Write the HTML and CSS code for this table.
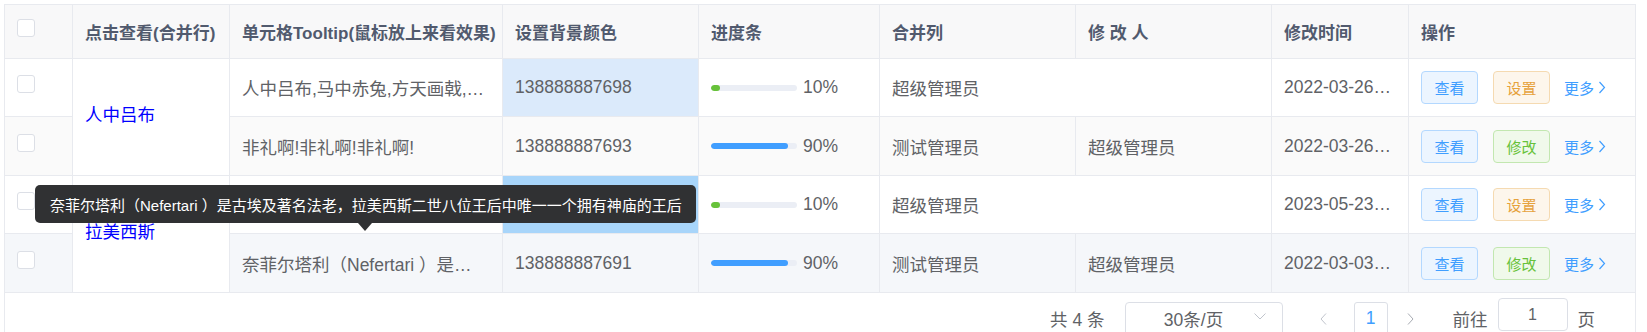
FILE: index.html
```html
<!DOCTYPE html>
<html lang="zh-CN">
<head>
<meta charset="utf-8">
<title>表格</title>
<link rel="stylesheet" href="styles.css">
</head>
<body>
<div class="panel">
  <div class="grid">
    <div class="row head">
      <div class="cell"><span class="checkbox"></span></div>
      <div class="cell">点击查看(合并行)</div>
      <div class="cell">单元格Tooltip(鼠标放上来看效果)</div>
      <div class="cell">设置背景颜色</div>
      <div class="cell">进度条</div>
      <div class="cell">合并列</div>
      <div class="cell">修 改 人</div>
      <div class="cell">修改时间</div>
      <div class="cell last">操作</div>
    </div>

    <div class="row">
      <div class="cell"><span class="checkbox"></span></div>
      <div class="cell merged-rows"><a class="name-link" href="#">人中吕布</a></div>
      <div class="cell tip"><span class="ellipsis">人中吕布,马中赤兔,方天画戟,威震天下</span></div>
      <div class="cell tint-light"><span class="ellipsis">138888887698</span></div>
      <div class="cell"><div class="progress"><div class="track"><div class="bar green" style="width:10%"></div></div><span>10%</span></div></div>
      <div class="cell merged-cols">超级管理员</div>
      <div class="cell time"><span class="ellipsis">2022-03-26 12:30:00</span></div>
      <div class="cell last actions">
        <span class="btn btn-primary">查看</span>
        <span class="btn btn-warning">设置</span>
        <a class="more" href="#">更多<svg width="8" height="13" viewBox="0 0 8 13"><polyline points="1.5,1 6.5,6.5 1.5,12" fill="none" stroke="currentColor" stroke-width="1.2"/></svg></a>
      </div>
    </div>

    <div class="row stripe">
      <div class="cell"><span class="checkbox"></span></div>
      <div class="cell tip"><span class="ellipsis">非礼啊!非礼啊!非礼啊!</span></div>
      <div class="cell"><span class="ellipsis">138888887693</span></div>
      <div class="cell"><div class="progress"><div class="track"><div class="bar blue" style="width:90%"></div></div><span>90%</span></div></div>
      <div class="cell">测试管理员</div>
      <div class="cell">超级管理员</div>
      <div class="cell time"><span class="ellipsis">2022-03-26 18:20:00</span></div>
      <div class="cell last actions">
        <span class="btn btn-primary">查看</span>
        <span class="btn btn-success">修改</span>
        <a class="more" href="#">更多<svg width="8" height="13" viewBox="0 0 8 13"><polyline points="1.5,1 6.5,6.5 1.5,12" fill="none" stroke="currentColor" stroke-width="1.2"/></svg></a>
      </div>
    </div>

    <div class="row">
      <div class="cell"><span class="checkbox"></span></div>
      <div class="cell merged-rows"><a class="name-link" href="#">拉美西斯</a></div>
      <div class="cell tip"><span class="ellipsis">奈菲尔塔利（Nefertari ）是古埃及著名法老，拉美西斯二世八位王后中唯一一个拥有神庙的王后</span></div>
      <div class="cell tint-strong"><span class="ellipsis">138888887692</span></div>
      <div class="cell"><div class="progress"><div class="track"><div class="bar green" style="width:10%"></div></div><span>10%</span></div></div>
      <div class="cell merged-cols">超级管理员</div>
      <div class="cell time"><span class="ellipsis">2023-05-23 09:15:00</span></div>
      <div class="cell last actions">
        <span class="btn btn-primary">查看</span>
        <span class="btn btn-warning">设置</span>
        <a class="more" href="#">更多<svg width="8" height="13" viewBox="0 0 8 13"><polyline points="1.5,1 6.5,6.5 1.5,12" fill="none" stroke="currentColor" stroke-width="1.2"/></svg></a>
      </div>
    </div>

    <div class="row hover">
      <div class="cell"><span class="checkbox"></span></div>
      <div class="cell tip"><span class="ellipsis">奈菲尔塔利（Nefertari ）是古埃及著名法老，拉美西斯二世八位王后中唯一一个拥有神庙的王后</span></div>
      <div class="cell"><span class="ellipsis">138888887691</span></div>
      <div class="cell"><div class="progress"><div class="track"><div class="bar blue" style="width:90%"></div></div><span>90%</span></div></div>
      <div class="cell">测试管理员</div>
      <div class="cell">超级管理员</div>
      <div class="cell time"><span class="ellipsis">2022-03-03 10:00:00</span></div>
      <div class="cell last actions">
        <span class="btn btn-primary">查看</span>
        <span class="btn btn-success">修改</span>
        <a class="more" href="#">更多<svg width="8" height="13" viewBox="0 0 8 13"><polyline points="1.5,1 6.5,6.5 1.5,12" fill="none" stroke="currentColor" stroke-width="1.2"/></svg></a>
      </div>
    </div>
  </div>

  <div class="pager">
    <span class="total">共 4 条</span>
    <div class="select">
      <span class="select-text">30条/页</span>
      <svg class="select-arrow" width="12" height="7" viewBox="0 0 12 7"><polyline points="0.5,0.5 6,6 11.5,0.5" fill="none" stroke="#c0c4cc" stroke-width="1"/></svg>
    </div>
    <span class="nav prev"><svg width="7" height="12" viewBox="0 0 7 12"><polyline points="6,0.5 1,6 6,11.5" fill="none" stroke="currentColor" stroke-width="1"/></svg></span>
    <span class="page active">1</span>
    <span class="nav next"><svg width="7" height="12" viewBox="0 0 7 12"><polyline points="1,0.5 6,6 1,11.5" fill="none" stroke="currentColor" stroke-width="1"/></svg></span>
    <span class="jump-label">前往</span>
    <span class="jump-input">1</span>
    <span class="jump-unit">页</span>
  </div>

  <div class="tooltip">奈菲尔塔利（Nefertari ）是古埃及著名法老，拉美西斯二世八位王后中唯一一个拥有神庙的王后</div>
</div>
</body>
</html>
```

FILE: styles.css
```css
* {
  box-sizing: border-box;
}

html,
body {
  margin: 0;
  overflow: hidden;
  background: #ffffff;
}

body {
  padding: 4px 11px 0 4px;
  font-family: "Liberation Sans", "Noto Sans CJK SC", sans-serif;
  font-size: 17.5px;
  color: #606266;
}

.panel {
  position: relative;
  width: 1632px;
  height: 360px;
  border: 1px solid #e8eaef;
}

.grid {
  display: grid;
  grid-template-columns: 68px 157px 273px 196px 181px 196px 196px 137px 226px;
  grid-template-rows: 54px 58px 59px 58px 59px;
}

.row {
  display: contents;
}

.cell {
  display: flex;
  align-items: center;
  min-width: 0;
  padding: 0 12px;
  overflow: hidden;
  white-space: nowrap;
  border-right: 1px solid #e8eaef;
  border-bottom: 1px solid #e8eaef;
  background: #ffffff;
}

.cell.last {
  border-right: none;
}

.cell.tip,
.cell.time {
  padding-right: 14px;
}

.head .cell {
  background: #f8f8f9;
  color: #515a6e;
  font-weight: bold;
  font-size: 17px;
}

.stripe .cell {
  background: #fafafa;
}

.hover .cell {
  background: #f5f7fa;
}

.cell.merged-rows {
  grid-row: span 2;
  background: #ffffff;
}

.cell.merged-cols {
  grid-column: span 2;
}

.cell.tint-light {
  background: #dbeafb;
}

.cell.tint-strong {
  background: #a8d5fa;
}

.ellipsis {
  display: block;
  min-width: 0;
  overflow: hidden;
  text-overflow: ellipsis;
  white-space: nowrap;
}

.checkbox {
  display: block;
  width: 18px;
  height: 18px;
  margin-bottom: 7px;
  border: 1px solid #dcdfe6;
  border-radius: 3px;
  background: #ffffff;
}

.name-link {
  color: #0000ff;
  text-decoration: none;
  margin-top: -8px;
}

.progress {
  display: flex;
  align-items: center;
  gap: 6px;
}

.track {
  width: 86px;
  height: 6px;
  border-radius: 3px;
  background: #ebeef5;
  overflow: hidden;
}

.bar {
  height: 100%;
  border-radius: 3px;
}

.bar.green {
  background: #67c23a;
}

.bar.blue {
  background: #409eff;
}

.actions {
  gap: 15px;
}

.btn {
  display: inline-flex;
  align-items: center;
  justify-content: center;
  width: 57px;
  height: 33px;
  border: 1px solid;
  border-radius: 4px;
  font-size: 15px;
}

.btn-primary {
  color: #409eff;
  background: #ecf5ff;
  border-color: #b3d8ff;
}

.btn-warning {
  color: #e6a23c;
  background: #fdf6ec;
  border-color: #f5dab1;
}

.btn-success {
  color: #67c23a;
  background: #f0f9eb;
  border-color: #c2e7b0;
}

.more {
  display: inline-flex;
  align-items: center;
  gap: 4px;
  margin-left: -1px;
  font-size: 15px;
  color: #409eff;
  text-decoration: none;
}

.pager {
  display: flex;
  align-items: center;
  justify-content: flex-end;
  height: 33px;
  margin-top: 9px;
  padding-right: 40px;
}

.total {
  margin-right: 20px;
}

.select {
  display: flex;
  align-items: center;
  width: 158px;
  height: 34px;
  padding: 0 16px 0 0;
  border: 1px solid #dcdfe6;
  border-radius: 4px;
}

.select-text {
  flex: 1;
  text-align: center;
  padding-left: 8px;
}

.select-arrow {
  margin-top: -5px;
}

.nav {
  display: flex;
  align-items: center;
  justify-content: center;
  width: 30px;
  height: 32px;
}

.prev {
  margin-left: 26px;
  color: #c0c4cc;
}

.next {
  margin-left: 8px;
  color: #a8abb2;
}

.page {
  display: flex;
  align-items: center;
  justify-content: center;
  width: 34px;
  height: 33px;
  margin-left: 15px;
  border: 1px solid #dcdfe6;
  border-radius: 3px;
}

.page.active {
  color: #409eff;
}

.jump-label {
  margin-left: 27px;
}

.jump-input {
  display: flex;
  align-items: center;
  justify-content: center;
  width: 70px;
  height: 33px;
  margin-left: 10px;
  margin-bottom: 8px;
  border: 1px solid #dcdfe6;
  border-radius: 4px;
  font-size: 16px;
}

.jump-unit {
  margin-left: 10px;
}

.tooltip {
  position: absolute;
  left: 30px;
  top: 180px;
  width: 661px;
  height: 38px;
  display: flex;
  align-items: center;
  padding: 0 15px;
  border-radius: 5px;
  background: #303133;
  color: #ffffff;
  font-size: 15px;
  white-space: nowrap;
}

.tooltip::after {
  content: "";
  position: absolute;
  left: 323px;
  top: 100%;
  border-top: 8px solid #303133;
  border-left: 7px solid transparent;
  border-right: 7px solid transparent;
}
```
